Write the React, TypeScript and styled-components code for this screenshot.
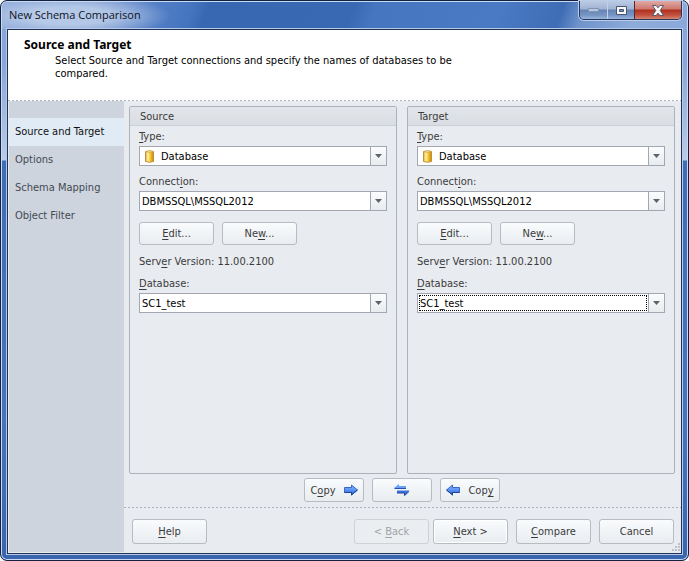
import React, { useId } from "react";
import styled, { createGlobalStyle, css } from "styled-components";

const GlobalStyle = createGlobalStyle`
  * { box-sizing: border-box; }
  body {
    margin: 0;
    background: #f4f5f7;
    color: #3b3b3b;
    font: 11px/13px "DejaVu Sans Condensed", "Noto Sans", sans-serif;
  }
  button, select { font: inherit; color: inherit; margin: 0; }
  u {
    text-decoration-thickness: 1px;
    text-underline-offset: 2px;
    text-decoration-skip-ink: none;
  }
`;

const dashes = css`
  background-image: repeating-linear-gradient(90deg, #aeb3bb 0 2px, transparent 2px 4px);
  background-size: 100% 1px;
  background-repeat: no-repeat;
`;

const Frame = styled.div`
  display: flex;
  flex-direction: column;
  min-height: 100vh;
  padding: 0 6px 6px;
  border: 1px solid #14213f;
  border-radius: 7px;
  box-shadow: inset 0 0 0 1px #c9dbf3;
  background:
    radial-gradient(ellipse 100px 22px at 70px 15px, rgba(200, 215, 238, 0.75) 40%, transparent 100%) 0 0 / 100% 28px no-repeat,
    linear-gradient(110deg, #8fabda 0, #7596cf 14%, #4f7cc4 24%, #4574bf 28%, #3968b2 30%, #3a69b4 51%, #4676c0 54%, #4a7ac4 72%, #3f6db5 81%, #6f93ca 84%, #8fabda 92%, #8aa8da 100%) 0 0 / 100% 28px no-repeat,
    linear-gradient(#87a7d8 0 60px, #b9cbe6 159px, #3f6db5 160px, #4574bd 420px, #3865ae 100%);
`;

const TitleBar = styled.header`
  display: flex;
  justify-content: space-between;
  height: 28px;
`;

const Title = styled.h1`
  margin: 6px 0 0 2px;
  font: 11px/16px "Open Sans", "Noto Sans", sans-serif;
  color: #0c1424;
`;

const Caption = styled.div`
  display: flex;
  height: 19px;
  border: 1px solid #26375c;
  border-top: 0;
  border-radius: 0 0 5px 5px;
  overflow: hidden;
  box-shadow: 0 0 0 1px #b9cdea;
`;

const CaptionButton = styled.button<{ $close?: boolean }>`
  display: flex;
  align-items: center;
  justify-content: center;
  width: ${(p) => (p.$close ? 47 : 27)}px;
  padding: 0;
  border: 0;
  border-left: 1px solid ${(p) => (p.$close ? "#5b2630" : "#c2d1e8")};
  background: ${(p) =>
    p.$close
      ? "linear-gradient(#e0aaa5 0, #cf766c 45%, #b02f1d 50%, #c25443 80%, #d98674 100%)"
      : "linear-gradient(#bccbe3 0, #9fb3d4 45%, #6583b4 50%, #7896c5 80%, #9bb7df 100%)"};
  &:first-child { border-left: 0; }
`;

const Client = styled.main`
  display: flex;
  flex: 1;
  flex-direction: column;
  border: 1px solid #1f3255;
  outline: 1px solid #b5cbe9;
  background: #e8ebf0;
`;

const Banner = styled.section`
  min-height: 71px;
  padding: 8px 16px 16px;
  background-color: #fff;
  ${dashes}
  background-position: 0 100%;
`;

const BannerTitle = styled.h2`
  margin: 0 0 2px;
  font: 700 12px/14px "Noto Sans", sans-serif;
  color: #000;
`;

const BannerText = styled.p`
  max-width: 440px;
  margin: 0;
  padding-left: 31px;
  color: #000;
`;

const Body = styled.div`
  display: flex;
  flex: 1;
`;

const Sidebar = styled.nav`
  display: flex;
  flex-direction: column;
  width: 115px;
  margin: 0 0 1px 1px;
  padding-top: 17px;
  background: #cdd4de;
`;

const NavLink = styled.a<{ $active?: boolean }>`
  padding-left: 6px;
  line-height: 28px;
  text-decoration: none;
  color: ${(p) => (p.$active ? "#111" : "#444a52")};
  background: ${(p) => (p.$active ? "#e1ebf6" : "transparent")};
`;

const Content = styled.div`
  display: flex;
  flex: 1;
  flex-direction: column;
`;

const Panels = styled.div`
  display: grid;
  flex: 1;
  grid-template-columns: 1fr 1fr;
  gap: 10px;
  padding: 5px 6px 0 5px;
`;

const Panel = styled.section`
  border: 1px solid #adb2ba;
  border-radius: 2px;
`;

const PanelTitle = styled.h3`
  margin: 0 0 3px;
  padding: 3px 10px 2px;
  border-bottom: 1px solid #cbd0d6;
  background: linear-gradient(#e2e5e9, #dadee3);
  font-size: 11px;
  font-weight: 400;
  line-height: 13px;
`;

const Fields = styled.div`
  padding: 0 9px;
`;

const Label = styled.label`
  display: block;
  padding: 1px 0 3px;
`;

const SelectBox = styled.div`
  position: relative;
  margin-bottom: 8px;
  color: #000;
`;

const Select = styled.select<{ $icon?: boolean }>`
  display: block;
  appearance: none;
  width: 100%;
  height: 20px;
  padding: 0 20px 0 ${(p) => (p.$icon ? 21 : 2)}px;
  border: 1px solid #a2a7b2;
  border-radius: 0;
  outline: 0;
  background: #fff;
`;

const Drop = styled.span`
  position: absolute;
  top: 1px;
  right: 1px;
  bottom: 1px;
  display: flex;
  align-items: center;
  justify-content: center;
  width: 16px;
  border-left: 1px solid #a2a7b2;
  background: linear-gradient(#fbfcfd, #e8ecef);
  pointer-events: none;
`;

const FocusRing = styled.span`
  position: absolute;
  inset: 2px 18px 2px 2px;
  border: 1px dotted #000;
  pointer-events: none;
`;

const TypeIcon = styled.span`
  position: absolute;
  top: 4px;
  left: 6px;
  display: flex;
  pointer-events: none;
`;

const Actions = styled.div`
  display: flex;
  gap: 8px;
  margin: 11px 0 10px;
`;

const Button = styled.button<{ $h: number; $w: number; $default?: boolean }>`
  display: flex;
  align-items: center;
  justify-content: center;
  gap: 8px;
  width: ${(p) => p.$w}px;
  height: ${(p) => p.$h}px;
  padding: 0;
  border: 1px solid #b7bcc2;
  border-radius: 3px;
  background: linear-gradient(#f9fbfd, #e9edf0);
  box-shadow: ${(p) => (p.$default ? "inset 0 0 0 1px #fff" : "none")};
  &:disabled {
    color: #a1a3a6;
    border-color: #ced2d6;
    background: #ebeef1;
  }
`;

const Version = styled.p`
  margin: 0 0 8px;
`;

const CopyRow = styled.div`
  display: flex;
  justify-content: center;
  gap: 8px;
  padding: 4px 1px 5px 0;
`;

const FooterWrap = styled.div`
  position: relative;
`;

const Footer = styled.footer`
  display: flex;
  padding: 12px 7px 9px 8px;
  ${dashes}
`;

const FooterGroup = styled.div`
  display: flex;
  gap: 8px;
  margin-left: auto;
`;

const Pair = styled.div`
  display: flex;
  gap: 4px;
`;

const Grip = styled.svg`
  position: absolute;
  right: 0;
  bottom: 1px;
`;

function Arrow({ left }: { left?: boolean }) {
  const id = useId();
  return (
    <svg width="14" height="12" viewBox="0 0 14 12" aria-hidden="true">
      <defs>
        <linearGradient id={id} x1="0" y1="0" x2="0" y2="1">
          <stop offset="0" stopColor="#8db6ff" />
          <stop offset="0.5" stopColor="#5b93f5" />
          <stop offset="1" stopColor="#2a5fcc" />
        </linearGradient>
      </defs>
      <g transform={left ? "matrix(-1 0 0 1 14 0)" : undefined}>
        <path
          d="M0.5 3.5V8.5H7.5V11L13.5 6L7.5 1V3.5Z"
          fill={`url(#${id})`}
          stroke="#3568c8"
        />
        <path d="M0.5 8.5H7.5V11L13.5 6" fill="none" stroke="#1c4290" />
      </g>
    </svg>
  );
}

function SwapIcon() {
  return (
    <svg width="16" height="12" viewBox="0 0 16 12" aria-hidden="true">
      <path d="M0 4L5 0V2H12V5H0Z" fill="#6a9ff8" />
      <path d="M1 4.5H12" stroke="#2350a8" />
      <path d="M3 6.5H15.5L11 11.5V9H3Z" fill="#3a73dd" />
      <path d="M3 9H10.5V11.5L15 7.5" stroke="#1d479c" fill="none" />
    </svg>
  );
}

function CylinderIcon() {
  const id = useId();
  return (
    <svg width="9" height="13" viewBox="0 0 9 13" aria-hidden="true">
      <defs>
        <linearGradient id={id}>
          <stop offset="0" stopColor="#e0a62c" />
          <stop offset="0.3" stopColor="#fff3b0" />
          <stop offset="0.6" stopColor="#f8c529" />
          <stop offset="1" stopColor="#c8860c" />
        </linearGradient>
      </defs>
      <path d="M0.5 1.5V11.5Q4.5 13 8.5 11.5V1.5Z" fill={`url(#${id})`} stroke="#c0913c" />
      <path d="M0.5 1.5Q4.5 -0.5 8.5 1.5Q4.5 3 0.5 1.5Z" fill="#fff0b0" stroke="#cda655" />
    </svg>
  );
}

type ComboProps = { label: React.ReactNode; value: string; icon?: boolean; focused?: boolean };

function Combo({ label, value, icon, focused }: ComboProps) {
  const id = useId();
  return (
    <>
      <Label htmlFor={id}>{label}</Label>
      <SelectBox>
        <Select id={id} $icon={icon}>
          <option>{value}</option>
        </Select>
        {icon && <TypeIcon><CylinderIcon /></TypeIcon>}
        {focused && <FocusRing />}
        <Drop>
          <svg width="7" height="4" viewBox="0 0 7 4" aria-hidden="true">
            <path d="M0 0H7L3.5 4Z" fill="#5c636d" />
          </svg>
        </Drop>
      </SelectBox>
    </>
  );
}

function ConnectionPanel({ title, focused }: { title: string; focused?: boolean }) {
  return (
    <Panel>
      <PanelTitle>{title}</PanelTitle>
      <Fields>
        <Combo label={<><u>T</u>ype:</>} value="Database" icon />
        <Combo label={<>Connect<u>i</u>on:</>} value="DBMSSQL\MSSQL2012" />
        <Actions>
          <Button $w={75} $h={23}><span><u>E</u>dit...</span></Button>
          <Button $w={75} $h={23}><span>Ne<u>w</u>...</span></Button>
        </Actions>
        <Version>Serv<u>e</u>r Version: 11.00.2100</Version>
        <Combo label={<><u>D</u>atabase:</>} value="SC1_test" focused={focused} />
      </Fields>
    </Panel>
  );
}

export default function App() {
  return (
    <>
      <GlobalStyle />
      <Frame>
        <TitleBar>
          <Title>New Schema Comparison</Title>
          <Caption>
            <CaptionButton aria-label="Minimize">
              <svg width="13" height="6" viewBox="0 0 13 6">
                <path d="M1.5 1.5H11.5V4.5H1.5Z" fill="#b9c8df" stroke="#7f93b5" />
              </svg>
            </CaptionButton>
            <CaptionButton aria-label="Maximize">
              <svg width="13" height="11" viewBox="0 0 13 11">
                <path d="M1.5 1.5H11.5V9.5H1.5Z" fill="#f8f8f8" stroke="#4a5570" />
                <path d="M4.5 4.5H8.5V6.5H4.5Z" fill="#7590bd" stroke="#4a5570" />
              </svg>
            </CaptionButton>
            <CaptionButton $close aria-label="Close">
              <svg width="12" height="11" viewBox="0 0 12 11">
                <path
                  d="M0.5 0.5H4L6 2.8L8 0.5H11.5L8.2 5.5L11.5 10.5H8L6 8.2L4 10.5H0.5L3.8 5.5Z"
                  fill="#fafafa"
                  stroke="#555a70"
                />
              </svg>
            </CaptionButton>
          </Caption>
        </TitleBar>
        <Client>
          <Banner>
            <BannerTitle>Source and Target</BannerTitle>
            <BannerText>
              Select Source and Target connections and specify the names of databases to be compared.
            </BannerText>
          </Banner>
          <Body>
            <Sidebar>
              <NavLink href="#source" $active>Source and Target</NavLink>
              <NavLink href="#options">Options</NavLink>
              <NavLink href="#mapping">Schema Mapping</NavLink>
              <NavLink href="#filter">Object Filter</NavLink>
            </Sidebar>
            <Content>
              <Panels>
                <ConnectionPanel title="Source" />
                <ConnectionPanel title="Target" focused />
              </Panels>
              <CopyRow>
                <Button $w={60} $h={24}><span>C<u>o</u>py</span><Arrow /></Button>
                <Button $w={60} $h={24} aria-label="Swap source and target"><SwapIcon /></Button>
                <Button $w={60} $h={24}><Arrow left /><span>Cop<u>y</u></span></Button>
              </CopyRow>
              <FooterWrap>
                <Footer>
                  <Button $w={75} $h={25}><span><u>H</u>elp</span></Button>
                  <FooterGroup>
                    <Pair>
                      <Button $w={75} $h={25} disabled><span>&lt; <u>B</u>ack</span></Button>
                      <Button $w={75} $h={25} $default><span><u>N</u>ext &gt;</span></Button>
                    </Pair>
                    <Button $w={75} $h={25}><span><u>C</u>ompare</span></Button>
                    <Button $w={75} $h={25}>Cancel</Button>
                  </FooterGroup>
                </Footer>
                <Grip width="9" height="9" viewBox="0 0 9 9" aria-hidden="true">
                  <path
                    d="M6 0h2v2h-2zM6 3h2v2h-2zM3 3h2v2h-2zM6 6h2v2h-2zM3 6h2v2h-2zM0 6h2v2h-2z"
                    fill="#bdc1c7"
                  />
                </Grip>
              </FooterWrap>
            </Content>
          </Body>
        </Client>
      </Frame>
    </>
  );
}
